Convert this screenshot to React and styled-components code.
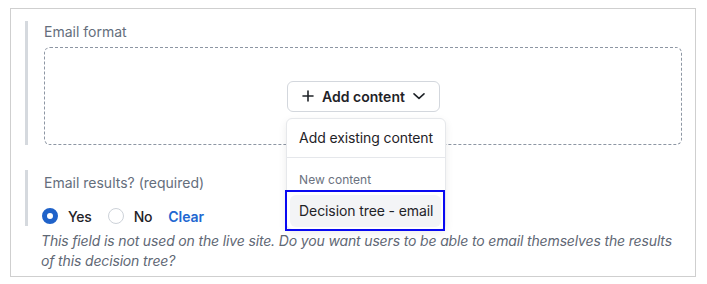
import React from "react";
import styled, { createGlobalStyle } from "styled-components";

const Global = createGlobalStyle`
  html, body { margin: 0; padding: 0; background: #fff; }
  body { font-family: Inter, "Noto Sans", Arial, sans-serif; color: #1f2937; -webkit-font-smoothing: antialiased; }
  * { box-sizing: border-box; }
`;

const Frame = styled.div`
  margin: 8px 0 0 10px;
  width: 686px;
  height: 269px;
  border: 1px solid #cfcfcf;
  padding: 12px 13px 0 14px;
`;

const Section = styled.div`
  border-left: 3px solid #d5d9de;
  padding: ${(p) => p.$pt || 0}px 0 0 16px;
  margin-top: ${(p) => p.$mt || 0}px;
`;

const Label = styled.div`
  font-size: 14px;
  line-height: 20px;
  color: #646e7c;
  padding-top: ${(p) => p.$pt || 0}px;
  margin-bottom: ${(p) => p.$mb || 0}px;
`;

const DropZone = styled.div`
  height: 98px;
  border: 1px dashed #8d96a3;
  border-radius: 6px;
  display: flex;
  align-items: center;
  justify-content: center;
`;

const MenuAnchor = styled.div`
  position: relative;
  margin-left: 1px;
`;

const AddButton = styled.button`
  display: flex;
  align-items: center;
  gap: 6px;
  height: 31px;
  padding: 0 12px;
  background: #fff;
  border: 1px solid #d3d7dd;
  border-radius: 6px;
  font-family: inherit;
  font-size: 14px;
  font-weight: 600;
  color: #1f2328;
  cursor: pointer;
`;

const Icon = styled.svg`
  width: 16px;
  height: 16px;
  flex: none;
`;

const Menu = styled.div`
  position: absolute;
  top: 37px;
  left: -1px;
  width: 160px;
  background: #fff;
  border: 1px solid #e6e8eb;
  border-radius: 6px;
  box-shadow: 0 3px 8px rgba(0, 0, 0, 0.08);
  z-index: 2;
`;

const MenuItem = styled.div`
  padding: 9px 12px 9px 12px;
  font-size: 14px;
  line-height: 20px;
  color: #1f2328;
  white-space: nowrap;
  letter-spacing: -0.1px;
`;

const Divider = styled.div`
  height: 1px;
  background: #e5e7eb;
`;

const GroupLabel = styled.div`
  padding: 14px 12px 2px;
  font-size: 12px;
  line-height: 16px;
  color: #6b7280;
`;

const FocusRing = styled.div`
  margin: 0 0 -2px -2px;
  width: 160px;
  border: 2px solid #0a0af2;
  padding: 3px 2px 2px 3px;
`;

const FocusedItem = styled.div`
  background: #f3f4f6;
  border-radius: 6px;
  padding: 6px 9px;
  font-size: 14px;
  line-height: 20px;
  color: #1f2328;
  white-space: nowrap;
  letter-spacing: -0.1px;
`;

const RadioRow = styled.div`
  display: flex;
  align-items: center;
  height: 20px;
  margin-top: 13px;
  margin-left: -2px;
  font-size: 14px;
`;

const RadioOption = styled.label`
  display: flex;
  align-items: center;
  gap: 10px;
  margin-right: 16px;
  font-weight: 500;
  color: #1f2328;
  letter-spacing: -0.2px;
`;

const RadioCircle = styled.span`
  width: 16px;
  height: 16px;
  border-radius: 50%;
  flex: none;
  ${(p) =>
    p.$checked
      ? `border: 5px solid #1f62c9; background: #fff;`
      : `border: 1px solid #cdd2d9; background: #fff;`}
`;

const ClearLink = styled.a`
  color: #2167d1;
  font-weight: 600;
  text-decoration: none;
  letter-spacing: -0.1px;
`;

const Help = styled.p`
  margin: 5px 0 0 16px;
  font-size: 14px;
  line-height: 20px;
  font-style: italic;
  color: #5f6875;
  letter-spacing: -0.15px;
`;

const Plus = () => (
  <Icon viewBox="0 0 16 16" fill="none" stroke="currentColor" strokeWidth="1.6" strokeLinecap="round">
    <path d="M8 3v10M3 8h10" />
  </Icon>
);

const Chevron = () => (
  <Icon viewBox="0 0 16 16" fill="none" stroke="currentColor" strokeWidth="1.6" strokeLinecap="round" strokeLinejoin="round">
    <path d="M3 5.8l5 4.6 5-4.6" />
  </Icon>
);

export default function App() {
  return (
    <>
      <Global />
      <Frame>
        <Section>
          <Label $pt={1} $mb={5}>Email format</Label>
          <DropZone>
            <MenuAnchor>
              <AddButton>
                <Plus />
                Add content
                <Chevron />
              </AddButton>
              <Menu>
                <MenuItem>Add existing content</MenuItem>
                <Divider />
                <GroupLabel>New content</GroupLabel>
                <FocusRing>
                  <FocusedItem>Decision tree - email</FocusedItem>
                </FocusRing>
              </Menu>
            </MenuAnchor>
          </DropZone>
        </Section>
        <Section $mt={25} $pt={3}>
          <Label>Email results? (required)</Label>
          <RadioRow>
            <RadioOption>
              <RadioCircle $checked />
              Yes
            </RadioOption>
            <RadioOption>
              <RadioCircle />
              No
            </RadioOption>
            <ClearLink href="#">Clear</ClearLink>
          </RadioRow>
        </Section>
        <Help>
          This field is not used on the live site. Do you want users to be able to email themselves the results of this decision tree?
        </Help>
      </Frame>
    </>
  );
}
